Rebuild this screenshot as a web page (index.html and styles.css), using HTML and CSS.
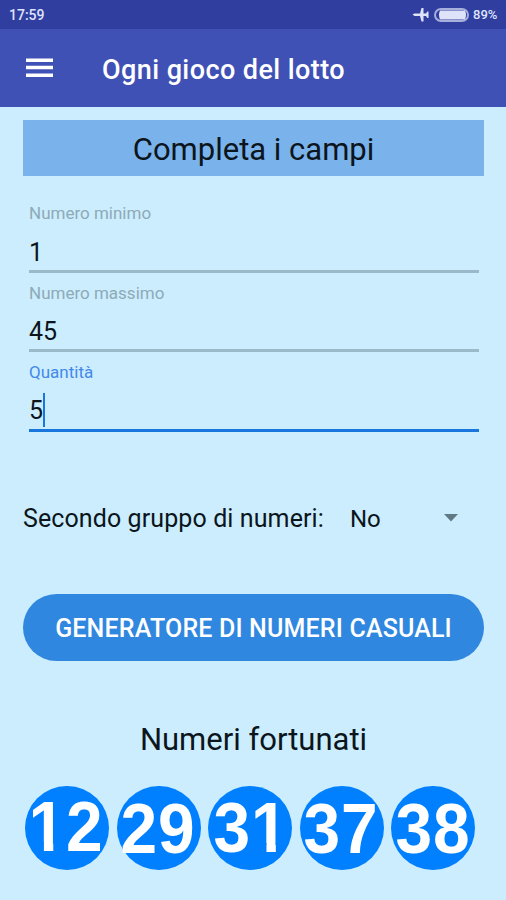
FILE: index.html
```html
<!DOCTYPE html>
<html lang="it">
<head>
<meta charset="utf-8">
<title>Ogni gioco del lotto</title>
<link rel="stylesheet" href="styles.css">
</head>
<body>
<div class="status">
  <span class="time">17:59</span>
  <span class="indicators">
    <svg class="plane" width="17" height="16" viewBox="0 0 17 16"><path d="M.5 7.500 2.500 6.500H8L9.500 1H11.500L11.500 6.500H14L15.300 4.500H16.500V11H15.300L14 9H11.500V14.500H9.500L8 9H2.500Z"/></svg>
    <svg class="battery" width="35" height="14" viewBox="0 0 35 14"><rect class="shell" x="1" y="1" width="33" height="12" rx="6"/><path class="charge" d="M6 2.500H31Q33 7 31 11.500H6Q4 7 6 2.500Z"/></svg>
    <span class="percent">89%</span>
  </span>
</div>
<header class="bar">
  <svg class="menu" width="27" height="20" viewBox="0 0 27 20"><path d="M0 .500H27V4H0ZM0 7.800H27V11.300H0ZM0 15.500H27V19H0Z"/></svg>
  <h1 class="title">Ogni gioco del lotto</h1>
</header>
<main class="content">
  <h2 class="banner"><span>Completa i campi</span></h2>
  <div class="fields">
    <div class="field"><span class="label">Numero minimo</span><span class="value first">1</span></div>
    <div class="field"><span class="label">Numero massimo</span><span class="value">45</span></div>
    <div class="field active"><span class="label">Quantità</span><span class="value">5<i class="caret"></i></span></div>
  </div>
  <div class="choice">
    <span class="question">Secondo gruppo di numeri:</span>
    <span class="answer">No</span>
    <svg width="14" height="8" viewBox="0 0 14 8"><path d="M0 0H14L7 7.500Z"/></svg>
  </div>
  <button class="generate"><span>GENERATORE DI NUMERI CASUALI</span></button>
  <h2 class="lucky">Numeri fortunati</h2>
  <div class="balls">
    <div class="ball twelve"><span class="number"><span class="one">1</span>2</span></div>
    <div class="ball"><span class="number">29</span></div>
    <div class="ball thirtyone"><span class="number">3<span class="one">1</span></span></div>
    <div class="ball"><span class="number">37</span></div>
    <div class="ball"><span class="number">38</span></div>
  </div>
</main>
</body>
</html>
```

FILE: styles.css
```css
* { box-sizing: border-box; }
body { margin: 0; width: 506px; height: 900px; overflow: hidden; background: #cbedfe; color: #0b151b; font-family: Roboto, sans-serif; }
h1, h2 { margin: 0; font-weight: 400; }
span { white-space: nowrap; }
svg { flex: none; }
.status { height: 29px; padding: 0 8px 0 9px; display: flex; align-items: center; justify-content: space-between; background: #303f9f; color: #dfe3fa; font-size: 14px; font-weight: 500; }
.indicators { display: flex; align-items: center; }
.plane { fill: #dfe3fa; margin-right: 5px; }
.shell { fill: none; stroke: #a7afdc; stroke-width: 2; }
.charge { fill: #dfe3fa; }
.percent { width: 25px; margin-left: 4px; font-size: 13px; }
.bar { height: 78px; display: flex; align-items: center; padding-left: 26px; background: #3f51b5; color: #fff; }
.menu { fill: #fff; margin-right: 49px; }
.title { font-size: 27px; line-height: 32px; font-weight: 500; letter-spacing: .42px; white-space: nowrap; padding-top: 3px; }
.content { padding: 13px 22px 0 23px; }
.banner { height: 56px; display: flex; align-items: center; justify-content: center; padding-top: 3px; background: #7ab2eb; font-size: 31px; }
.fields { padding: 17px 5px 0 6px; }
.field { height: 79.500px; padding-top: 10px; display: flex; flex-direction: column; border-bottom: 3px solid #9ab9c9; }
.label { height: 20px; font-size: 17px; line-height: 20px; color: #8eaab6; }
.value { height: 36px; margin-top: 10px; padding-top: 1px; display: flex; align-items: center; font-size: 25px; }
.value.first { padding-top: 3px; }
.active { border-color: #1976dc; }
.active .label { color: #4388e8; }
.caret { width: 2px; height: 34px; margin-top: -1px; background: #1976dc; }
.choice { height: 36px; margin-top: 68px; display: flex; align-items: center; font-size: 25px; }
.question { width: 327px; padding-top: 1px; letter-spacing: .1px; }
.answer { width: 94px; padding-top: 2px; font-size: 24px; }
.choice svg { fill: #617985; }
.generate { display: flex; align-items: center; justify-content: center; width: 461px; height: 67px; margin: 58px 0 0; padding: 2px 0 0; border: 0; border-radius: 34px; background: #3087df; color: #fff; font: 500 25px Roboto, sans-serif; letter-spacing: .17px; }
.lucky { margin-top: 60px; height: 38px; line-height: 38px; font-size: 31px; text-align: center; }
.balls { display: flex; gap: 7.500px; margin: 27px 0 0 2px; }
.ball { width: 84px; height: 84.500px; padding: 2px 1px 0 0; border-radius: 50%; display: flex; align-items: center; justify-content: center; background: #0080ff; color: #fff; font: bold 70px/1 "Liberation Sans", Arial, sans-serif; letter-spacing: 1px; }
.number { display: flex; transform: scaleX(.94); }
.twelve { padding: 0 3px 1px 0; }
.thirtyone { padding: 1px 0 0 2px; }
/* numeral one without its foot serif */
.one { clip-path: polygon(0 0, 100% 0, 100% .71em, .378em .71em, .378em 1em, .236em 1em, .236em .71em, 0 .71em); }
```
